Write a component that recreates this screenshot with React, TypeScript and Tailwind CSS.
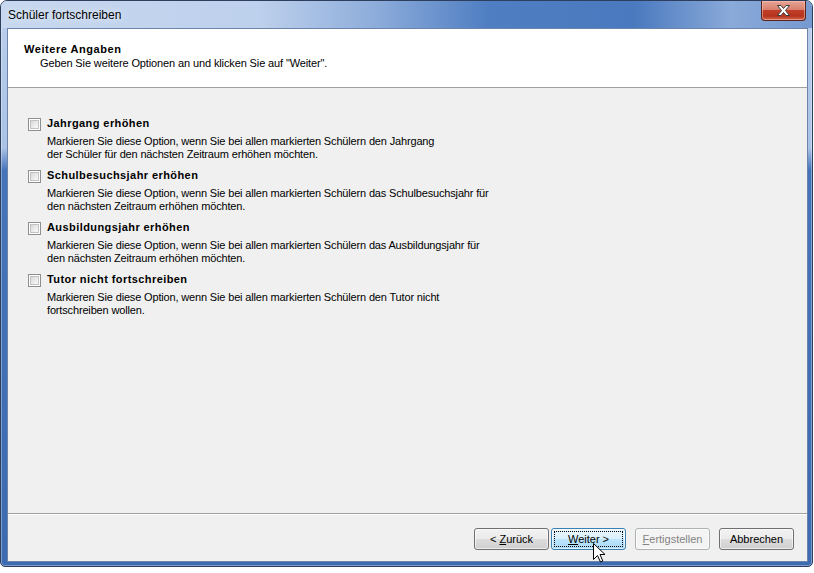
import React from 'react'

const options = [
  {
    label: 'Jahrgang erhöhen',
    text: ['Markieren Sie diese Option, wenn Sie bei allen markierten Schülern den Jahrgang', 'der Schüler für den nächsten Zeitraum erhöhen möchten.'],
  },
  {
    label: 'Schulbesuchsjahr erhöhen',
    text: ['Markieren Sie diese Option, wenn Sie bei allen markierten Schülern das Schulbesuchsjahr für', 'den nächsten Zeitraum erhöhen möchten.'],
  },
  {
    label: 'Ausbildungsjahr erhöhen',
    text: ['Markieren Sie diese Option, wenn Sie bei allen markierten Schülern das Ausbildungsjahr für', 'den nächsten Zeitraum erhöhen möchten.'],
  },
  {
    label: 'Tutor nicht fortschreiben',
    text: ['Markieren Sie diese Option, wenn Sie bei allen markierten Schülern den Tutor nicht', 'fortschreiben wollen.'],
  },
]

function Checkbox() {
  return (
    <div className="w-[13px] h-[13px] shrink-0 border border-[#8f8f8f] bg-white p-px">
      <div className="w-full h-full border border-[#c3c3c3] bg-gradient-to-br from-[#d8d8d8] to-[#fbfbfb]" />
    </div>
  )
}

function WinButton({
  children,
  variant = 'normal',
  className = '',
  overlay,
}: {
  children: React.ReactNode
  variant?: 'normal' | 'hot' | 'disabled'
  className?: string
  overlay?: React.ReactNode
}) {
  const look =
    variant === 'hot'
      ? 'border-[#3c7fb1] bg-[linear-gradient(#eaf6fd_0%,#d9f0fc_50%,#bee6fd_50%,#a7d9f5_100%)] text-black'
      : variant === 'disabled'
        ? 'border-[#adb2b5] bg-[#f4f4f4] text-[#838383]'
        : 'border-[#707070] bg-[linear-gradient(#f2f2f2_0%,#ebebeb_50%,#dddddd_50%,#cfcfcf_100%)] text-black'
  return (
    <div
      className={`relative w-[75px] h-[22px] rounded-[3px] border flex items-center justify-center text-[11px] leading-none shadow-[inset_0_0_0_1px_rgba(255,255,255,0.6)] ${look} ${className}`}
    >
      {variant === 'hot' && (
        <div className="absolute inset-[2px] border border-dotted border-black" />
      )}
      <span className="relative">{children}</span>
      {overlay}
    </div>
  )
}

// mouse pointer hovering the "Weiter" button
function Cursor() {
  return (
    <svg className="absolute left-[41px] top-[14px]" width="13" height="20" viewBox="0 0 13 20">
      <path
        d="M0.5 0.5 L0.5 16.5 L4.5 12.5 L7.5 19 L9.8 18 L7 11.5 L12 11.5 Z"
        fill="white"
        stroke="black"
        strokeWidth="1"
      />
    </svg>
  )
}

export default function App() {
  return (
    <div className="w-[814px] h-[573px] bg-white font-['Liberation_Sans',Arial,sans-serif] text-black">
      <div className="w-[813px] h-[567px] rounded-t-[7px] rounded-b-[5px] border border-[#2d3f5c] bg-[linear-gradient(#bcd0ec_0%,#a9c2e6_26%,#4574ba_30%,#3c6bb2_100%)] flex flex-col overflow-hidden shadow-[inset_0_0_0_1px_rgba(255,255,255,0.35)]">
        {/* title bar */}
        <div className="h-[27px] shrink-0 flex items-start bg-[linear-gradient(to_right,#c7d8ef_0%,#bdd0ec_32%,#8eaddb_46%,#4f7ec2_60%,#4a79bf_78%,#8aaad9_90%,#7599d0_100%)]">
          <div className="pl-[7px] pt-[7px] text-[12px] leading-[14px] [text-shadow:0_0_6px_rgba(255,255,255,0.9)]">
            Schüler fortschreiben
          </div>
          <div className="ml-auto mr-[6px] w-[45px] h-[20px] rounded-b-[4px] border border-t-0 border-[#5a231c] bg-[linear-gradient(#e7a596_0%,#d8806d_45%,#c13f28_50%,#b6341f_80%,#d56a4e_100%)] flex items-center justify-center shadow-[inset_0_0_0_1px_rgba(255,200,190,0.5)]">
            <svg width="13" height="11" viewBox="0 0 13 11">
              <path
                d="M0.5 0.5 H4 L6.5 3.5 L9 0.5 H12.5 L8.5 5.5 L12.5 10.5 H9 L6.5 7.5 L4 10.5 H0.5 L4.5 5.5 Z"
                fill="white"
                stroke="#3a3a3a"
                strokeWidth="1"
              />
            </svg>
          </div>
        </div>

        <div className="flex flex-1 min-h-0">
          <div className="w-[6px] shrink-0" />
          {/* client area */}
          <div className="w-[801px] border border-[#6d84a8] bg-[#f0f0f0] flex flex-col">
            <div className="h-[59px] shrink-0 bg-white border-b border-[#a0a0a0] pt-[13px] pl-[16px] text-[11px]">
              <div className="font-bold leading-[14px] tracking-[0.55px]">Weitere Angaben</div>
              <div className="pl-[16px] leading-[14px] tracking-[-0.12px]">Geben Sie weitere Optionen an und klicken Sie auf "Weiter".</div>
            </div>

            <div className="flex-1 pt-[29px] pl-[20px] flex flex-col gap-[8px] text-[11px]">
              {options.map((o) => (
                <div key={o.label} className="flex gap-[6px]">
                  <div className="pt-px">
                    <Checkbox />
                  </div>
                  <div className="flex flex-col gap-[5px]">
                    <div className="font-bold leading-[13px] tracking-[0.42px]">{o.label}</div>
                    <div className="leading-[13px] tracking-[-0.16px]">
                      {o.text.map((t) => (
                        <div key={t}>{t}</div>
                      ))}
                    </div>
                  </div>
                </div>
              ))}
            </div>

            <div className="h-px bg-[#a0a0a0]" />
            <div className="h-px bg-white" />
            <div className="h-[46px] shrink-0 pt-[13px] pr-[13px] flex justify-end">
              <WinButton>
                &lt; <u>Z</u>urück
              </WinButton>
              <WinButton variant="hot" className="ml-[2px]" overlay={<Cursor />}>
                <u>W</u>eiter &gt;
              </WinButton>
              <WinButton variant="disabled" className="ml-[9px]">
                <u>F</u>ertigstellen
              </WinButton>
              <WinButton className="ml-[9px]">Abbrechen</WinButton>
            </div>
          </div>
          <div className="w-[4px] shrink-0" />
        </div>
        <div className="h-[4px] shrink-0" />
      </div>
    </div>
  )
}
